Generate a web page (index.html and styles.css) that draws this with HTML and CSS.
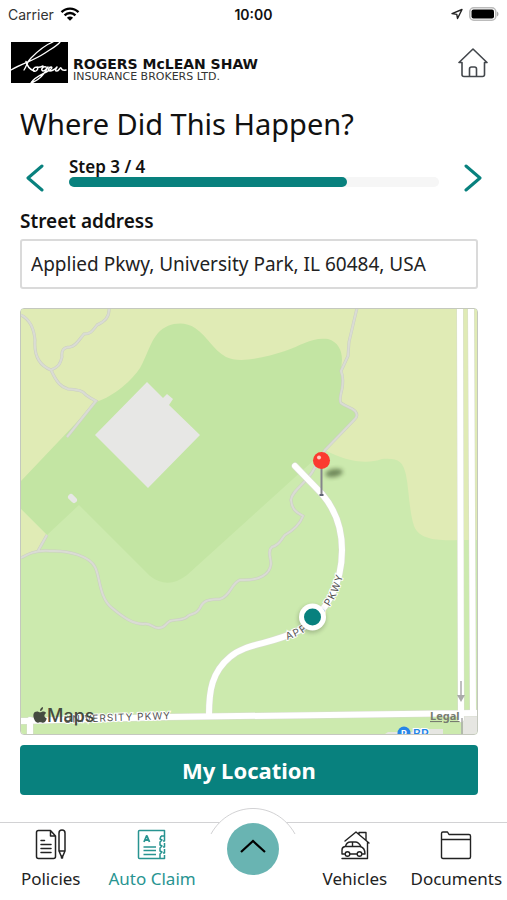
FILE: index.html
```html
<!doctype html>
<html lang="en">
<head>
<meta charset="utf-8">
<meta name="viewport" content="width=device-width, initial-scale=1">
<title>Auto Claim</title>
<link rel="stylesheet" href="styles.css">
</head>

<body>
<div class="status">
	<div class="status-left">
		<span>Carrier</span>
		<svg width="20" height="14" viewBox="0 0 20 14" fill="none" stroke="#000" stroke-width="2.4">
			<path d="M1.5 5.2C6.4.4 13.6.4 18.5 5.2M4.6 8.3c3.1-3 7.7-3 10.8 0"/>
			<path d="M10 13.8 6.9 10.7c1.8-1.7 4.4-1.7 6.2 0z" fill="#000" stroke="none"/>
		</svg>
	</div>
	<div class="status-time">10:00</div>
	<div class="status-right">
		<svg width="12" height="12" viewBox="0 0 12 12" fill="none" stroke="#222" stroke-width="1.4" stroke-linejoin="round"><path d="M11 1.500 6.5 10.500 5.8 6.4 1 5.600z"/></svg>
		<svg width="30" height="14" viewBox="0 0 30 14"><rect x=".8" y=".8" width="26" height="12.400" rx="4" fill="#fff" stroke="#bbb" stroke-width="1.600"/><rect x="2.500" y="2.500" width="22.500" height="9" rx="2" fill="#000"/><path d="M28 4.500c2 1 2 4 0 5z" fill="#aaa"/></svg>
	</div>
</div>

<header class="header">
	<div class="logo">
		<svg width="57" height="41" viewBox="0 0 57 41">
			<rect width="57" height="41" fill="#000"/>
			<g fill="none" stroke="#fff" stroke-linecap="round" stroke-linejoin="round">
				<path d="M0 28C12 21 22 19 34 11C40 7 46 4 49 0M13 28C17 22 15 21 20 16C27 9 34 3 42 0" stroke-width="1.300"/>
				<path d="M15 19.500c1 4 4 8 8 9.500" stroke-width="1.500"/>
				<path d="M26 25c-3 0-5 3-3 4s5-2 3-4c2 1 4 0 6-1M35 25c-3-1-6 3-3 4 2 0 4-3 5-4-3 6-8 13-17 16 3-6 12-9 17-12 3-1 5-4 3-4s-4 4-1 4c3 0 5-2 7-4-2 3-2 4 0 4s3-4 4-3 0 3 5 2" stroke-width="1.500"/>
			</g>
		</svg>
		<div class="logo-text">
			<strong>ROGERS McLEAN SHAW</strong>
			<span>INSURANCE BROKERS LTD.</span>
		</div>
	</div>
	<a class="home" href="#home" aria-label="Home">
		<svg width="30" height="30" viewBox="0 0 30 30" fill="none" stroke="#43474c" stroke-width="1.6" stroke-linecap="round" stroke-linejoin="round">
			<path d="M1 14.500 15 1l14 13.500h-2.500M1 14.500h3v12q0 2 2 2h18.500q2 0 2-2v-12"/>
			<path d="M11.500 28v-7q0-2 2-2h3q2 0 2 2v7"/>
		</svg>
	</a>
</header>

<main class="main">
	<h1>Where Did This Happen?</h1>

	<div class="steps">
		<button class="arrow" type="button" aria-label="Previous step"><svg width="18" height="28" viewBox="0 0 18 28"><path d="M16 2 2 14l14 12"/></svg></button>
		<div class="step">
			<div class="step-label">Step 3 / 4</div>
			<div class="bar"><div class="bar-fill" style="width:75%"></div></div>
		</div>
		<button class="arrow" type="button" aria-label="Next step"><svg width="18" height="28" viewBox="0 0 18 28"><path d="m2 2 14 12L2 26"/></svg></button>
	</div>

	<label class="label" for="address">Street address</label>
	<input class="input" id="address" type="text" value="Applied Pkwy, University Park, IL 60484, USA">

	<div class="map">
		<svg viewBox="21 309 456 425">
			<defs>
				<path id="applied" d="M209 715C209 690 212 672 230 657C246 643 270 645 300 630C328 612 342 583 342 550C342 526 334 508 322 494L295 466"/>
				<filter id="blur" x="-50%" y="-50%" width="200%" height="200%"><feGaussianBlur stdDeviation="2"/></filter>
			</defs>
			<rect x="21" y="308" width="456" height="427" fill="#cceaae"/>
			<!-- fields -->
			<path fill="#e0ebb5" d="M21 308h456v232h-19C436 541 419 539 414 526C409 510 409 490 406 475C403 461 398 458 382 459C366 465 345 461 325 450L200 420L21 482z"/>
			<!-- woods -->
			<path fill="#c3e5a3" d="M21 481L96 402C115 396 132 380 140 368C146 358 150 342 158 333C168 322 185 321 195 328C208 337 213 350 226 357C240 364 266 357 285 351C302 345 312 337 328 339C338 342 342 350 342 360L341 371L343 385L340 399Q344 405 352 408Q359 412 356 417L325 450L187 575Q168 590 150 576L79 505L47 535L21 509z"/>
			<path fill="#e0ebb5" d="M21 509L47 535L38 551L21 558z"/>
			<path fill="#e7e7e5" d="M147 382L163 398L167 394L173 399L169 405L200 435L148 488L95 435z"/>
			<path d="M71 497l3 3" stroke="#e7e7e5" stroke-width="6" stroke-linecap="round"/>
			<!-- trails -->
			<g class="trail">
				<path id="t1" d="M21 315C31 320 34 329 35 340C34 353 38 365 51 370C57 383 61 387 68 389C78 390 82 390 86 395C90 398 92 399 96 401L67 437"/>
				<path id="t2" d="M109 308C110 319 102 323 97 325C92 332 90 334 84 334C78 341 76 346 70 347C64 347 61 350 62 357C60 365 58 367 51 370"/>
				<path id="t3" d="M357 308L353 325L349 342L348 356L341 371Q344 378 342 389Q339 401 341 403C346 407 351 407 355 411Q359 416 354 420L325 450L314 469C308 482 291 491 291 500C292 511 298 513 303 516C300 524 292 531 285 535C281 539 280 545 272 547C267 551 271 558 271 564C270 574 260 581 240 580C231 583 231 596 220 599C210 600 204 599 200 608C196 615 192 613 188 616C184 621 176 619 170 621C165 624 165 628 159 628C153 629 151 622 143 624C133 624 124 618 112 608C99 598 100 576 95 567C90 557 70 550 50 551C35 550 28 554 21 558M38 551L47 535"/>
			</g>
			<g class="trail-fill">
				<use href="#t1"/>
				<use href="#t2"/>
				<use href="#t3"/>
			</g>
			<!-- lot next to the highway -->
			<path fill="#e6e6e2" d="M463 715h14v19h-14zM385 734l3-2h30l10-3h15v5z"/>
			<!-- roads -->
			<g class="casing">
				<path d="M460 308l1 411M471 308l2 405M21 721L167 717L477 713M30 720v16"/>
				<use href="#applied"/>
			</g>
			<g class="road">
				<path d="M460 308l1 411M471 308l2 405M21 721L167 717L477 713M30 720v16"/>
				<use href="#applied"/>
			</g>
			<path d="M461 681v17M462 718v16" stroke="#aaa" stroke-width="1.500"/>
			<path d="M457 695h8l-4 7z" fill="#aaa"/>
			<path id="university" d="M62 723L200 718" fill="none"/>
			<text class="street"><textPath href="#university" startOffset="2">UNIVERSITY PKWY</textPath></text>
			<text class="street" dy="4"><textPath href="#applied" startOffset="124">APPLIED PKWY</textPath></text>
			<circle cx="404" cy="733" r="6.500" fill="#2685e8"/>
			<text class="poi" x="413" y="738">BP</text>
			<text class="poi-mark" x="401" y="737">P</text>
			<!-- position -->
			<circle cx="312" cy="619" r="14" fill="#000" opacity=".2" filter="url(#blur)"/>
			<circle cx="312.500" cy="617" r="13.500" fill="#fff"/>
			<circle cx="312.500" cy="617" r="8.500" fill="#08817e"/>
			<!-- pin -->
			<ellipse cx="334" cy="473" rx="9" ry="4" fill="#263b18" opacity=".55" filter="url(#blur)" transform="rotate(-10 334 473)"/>
			<path d="M321.500 467v27" stroke="#85858b" stroke-width="2"/>
			<path d="M319.500 495h4" stroke="#606574" stroke-width="2"/>
			<circle cx="321.500" cy="460.500" r="8.500" fill="#fb3a30"/>
			<circle cx="319" cy="457.500" r="2" fill="#ffc9c0"/>
			<!-- map attribution -->
			<path fill="#454b40" d="M40 711c0-2 1-3.500 3-4 .2 2-1 4-3 4zM37 711.500c1.500 0 2 .8 3 .8s2-.8 3.500-.8c1 0 2 .5 2.600 1.500-2.600 1.600-2 4.400.7 5.400-.8 2.500-2.300 4.400-3.800 4.400-1 0-1.500-.6-2.700-.6s-1.800.6-2.700.6c-2.800 0-6.300-8-2.800-10.700.7-.4 1.500-.6 2.200-.6z"/>
			<text class="maps" x="47" y="722">Maps</text>
			<a href="#legal"><text class="legal" x="430" y="720">Legal</text></a>
		</svg>
	</div>

	<button class="btn" type="button">My Location</button>
</main>

<nav class="nav">
	<a href="#policies">
		<svg width="32" height="32" viewBox="0 0 32 32" fill="none" stroke="#222" stroke-width="1.500" stroke-linejoin="round" stroke-linecap="round">
			<path d="M15.500 1.500H3.500q-2 0-2 2v24q0 2 2 2h15q2 0 2-2V7zM15.500 1.500V7h5M6 11.500h3.500M6 15.500h10M6 19.500h10M6 23.500h10"/>
			<path d="M24 4q0-3 3-3t3 3v18l-3 7-3-7zM24 22h6M26.500 27v2h1v-2z"/>
		</svg>
		<span>Policies</span>
	</a>
	<a class="active" href="#claim">
		<svg width="32" height="32" viewBox="0 0 32 32" fill="none" stroke="#289491" stroke-width="1.500" stroke-linejoin="round">
			<path d="M25 7h3.500V1.500h-25q-1 0-1 1v26q0 1 1 1H24M25 7l-1 3 2 1-2 2v3l2 1-2 2v3l2 1-2 2v4.500M28.500 7v5H27M28.500 14v4H27M28.500 20v4H27M28.500 26v3.500H24"/>
			<path d="M8 13l2.500-6h.5l2.500 6M9 11h3.500" stroke-width="1.800"/>
			<path d="M7.500 18h12.500M7.500 21.500h12.500M7.500 25.500h12.500"/>
		</svg>
		<span>Auto Claim</span>
	</a>
	<div class="nav-mid">
		<button class="menu" type="button" aria-label="Open menu">
			<svg width="86" height="92" viewBox="0 0 86 92" fill="none">
				<path d="M1 26C20-8 66-8 85 26V92H1z" fill="#fff"/>
				<path d="M1 26C20-8 66-8 85 26" stroke="#d2d2d4"/>
				<circle cx="43" cy="41" r="26" fill="#69b4b2"/>
				<path d="m31 44 12-11 12 11" stroke="#000" stroke-width="2.200"/>
			</svg>
		</button>
	</div>
	<a href="#vehicles">
		<svg width="32" height="32" viewBox="0 0 32 32" fill="none" stroke="#222" stroke-width="1.400" stroke-linejoin="round" stroke-linecap="round">
			<path d="m6 12 11-9 13 11M20 5V3.500h7V11M28.500 13v16.500H3M3 25v-4q0-3 3-3.500h15q5 1 5 7.500h-2.500M3 25h2.500M11 25h7M6.500 17.500q1-4.500 5-4.500h5q3 0 5.500 4.500M13.500 13v4.500"/>
			<circle cx="8.500" cy="25" r="2.300"/>
			<circle cx="20.500" cy="25" r="2.300"/>
		</svg>
		<span>Vehicles</span>
	</a>
	<a href="#documents">
		<svg width="32" height="32" viewBox="0 0 32 32" fill="none" stroke="#222" stroke-width="1.400" stroke-linejoin="round">
			<path d="M1.500 10.500V4.500q0-1.500 1.500-1.500h4.500l1.500 2.500h20q1.500 0 1.500 1.500v21q0 1.500-1.500 1.500H3q-1.500 0-1.500-1.500V10.500h29"/>
		</svg>
		<span>Documents</span>
	</a>
</nav>
</body>
</html>
```

FILE: styles.css
```css
* {margin:0; padding:0; box-sizing:border-box;}
body {display:flex; flex-direction:column; min-height:100vh; background:#fff; color:#111; font-family:"Noto Sans", "Open Sans", sans-serif;}
svg {display:block;}
a {color:inherit; text-decoration:none;}
button {border:0; background:none; font:inherit; cursor:pointer;}

.status {display:grid; grid-template-columns:1fr auto 1fr; align-items:center; height:28px; padding:0 8px; font:14px Inter, sans-serif;}
.status-left {display:flex; align-items:center; gap:6px; color:#333;}
.status-time {font-weight:600;}
.status-right {display:flex; align-items:center; justify-content:flex-end; gap:6px;}

.header {display:flex; align-items:center; justify-content:space-between; padding:14px 19px 0 11px;}
.logo {display:flex; align-items:flex-end; gap:5px;}
.logo-text {display:flex; flex-direction:column; font-family:"DejaVu Sans", sans-serif; white-space:nowrap;}
.logo-text strong {font-size:14px; line-height:14px;}
.logo-text span {font-size:11px; line-height:12px; color:#333;}

.main {padding:21px 29px 0 20px;}
h1 {font-size:29px; line-height:40px; font-weight:400;}
.steps {display:flex; align-items:flex-end; gap:25px; margin:12px -4px 0 6px;}
.arrow path {fill:none; stroke:#08817e; stroke-width:3; stroke-linecap:round; stroke-linejoin:round;}
.step {flex:1; padding-bottom:5px;}
.step-label {font-size:17px; line-height:21px; font-weight:600;}
.bar {height:10px; border-radius:5px; background:#f6f6f6;}
.bar-fill {height:10px; border-radius:5px; background:#08817e;}
.label {display:block; margin-top:15px; font-size:19px; line-height:28px; font-weight:600;}
.input {display:block; width:100%; height:50px; margin-top:4px; padding:0 9px; border:2px solid #dadada; border-radius:3px; background:#fff; color:#222; font:19px "Noto Sans", "Open Sans", sans-serif;}

.map {margin-top:19px; border:1px solid #c4c8be; border-radius:4px; overflow:hidden;}
.map svg {width:100%; height:auto;}
.trail {fill:none; stroke:#cbcec2; stroke-width:3;}
.trail-fill {fill:none; stroke:#dadcd4; stroke-width:2;}
.casing {fill:none; stroke:#d8ddcf; stroke-width:7; stroke-linecap:round;}
.road {fill:none; stroke:#fff; stroke-width:6; stroke-linecap:round;}
.street {font:10px Inter, sans-serif; letter-spacing:1px; fill:#555; stroke:#fff; stroke-width:2px; paint-order:stroke;}
.poi {font:600 12px Inter, sans-serif; fill:#2685e8; stroke:#fff; stroke-width:2px; paint-order:stroke;}
.poi-mark {font:700 9px Inter, sans-serif; fill:#fff;}
.maps {font:500 18px Inter, sans-serif; fill:#454b40;}
.legal {font:700 11px "Noto Sans", sans-serif; fill:#777c70; text-decoration:underline;}

.btn {display:block; width:100%; height:50px; margin-top:10px; border-radius:4px; background:#08817e; color:#fff; font-size:22px; font-weight:700;}

.nav {display:grid; grid-template-columns:repeat(5, 1fr); height:78px; margin-top:auto; border-top:1px solid #d2d2d4;}
.nav a {display:flex; flex-direction:column; align-items:center; padding-top:6px; color:#222; font-size:17px; line-height:24px; white-space:nowrap;}
.nav a span {margin-top:6px;}
.nav .active {color:#289491;}
.nav-mid {position:relative;}
.menu {position:absolute; left:50%; bottom:0; margin-left:-43px;}
```
